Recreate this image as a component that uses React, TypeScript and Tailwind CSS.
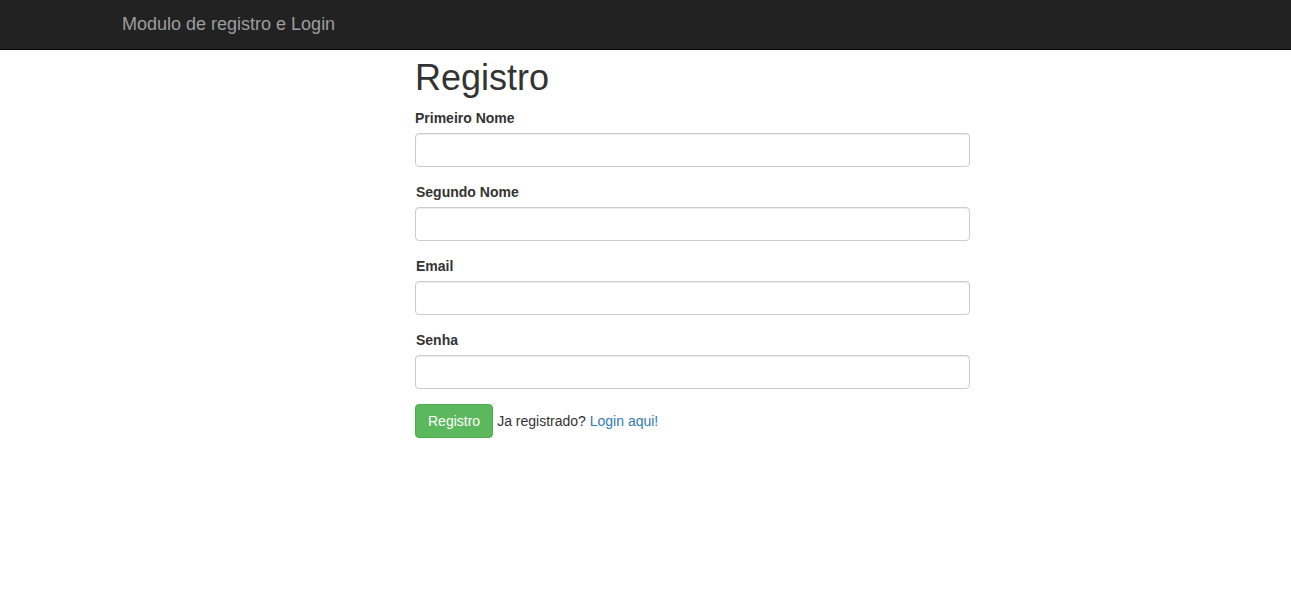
const Field = ({ label, type = "text", shift = false }: { label: string; type?: string; shift?: boolean }) => (
  <div className="mb-[15px]">
    <label className={`mb-[5px] block h-5 text-[14px] font-bold leading-5 ${shift ? "pl-px" : ""}`}>{label}</label>
    <input
      type={type}
      className="block h-[34px] w-full rounded-[4px] border border-[#ccc] bg-white px-3 py-1.5 text-[14px] shadow-[inset_0_1px_1px_rgba(0,0,0,0.075)] outline-none"
    />
  </div>
);

const App = () => {
  return (
    <div className="min-h-[593px] bg-white font-['Liberation_Sans',Arial,sans-serif] text-[14px] leading-[20px] text-[#333]">
      <nav className="h-[50px] border-b border-[#080808] bg-[#222]">
        <div className="pl-[122px]">
          <span className="block pt-[14px] text-[18px] leading-5 text-[#9d9d9d]">Modulo de registro e Login</span>
        </div>
      </nav>
      <div className="ml-[415px] w-[555px]">
        <h1 className="mt-[8px] mb-[10px] text-[36px] font-normal leading-[39.6px]">Registro</h1>
        <form>
          <Field label="Primeiro Nome" />
          <Field label="Segundo Nome" shift />
          <Field label="Email" type="email" shift />
          <Field label="Senha" type="password" shift />
          <div className="flex items-center">
            <button
              type="button"
              className="h-[34px] rounded-[4px] border border-[#4cae4c] bg-[#5cb85c] px-3 text-[14px] leading-5 text-white"
            >
              Registro
            </button>
            <span className="ml-1">
              Ja registrado? <a href="#" className="text-[#337ab7]">Login aqui!</a>
            </span>
          </div>
        </form>
      </div>
    </div>
  );
};

export default App;
